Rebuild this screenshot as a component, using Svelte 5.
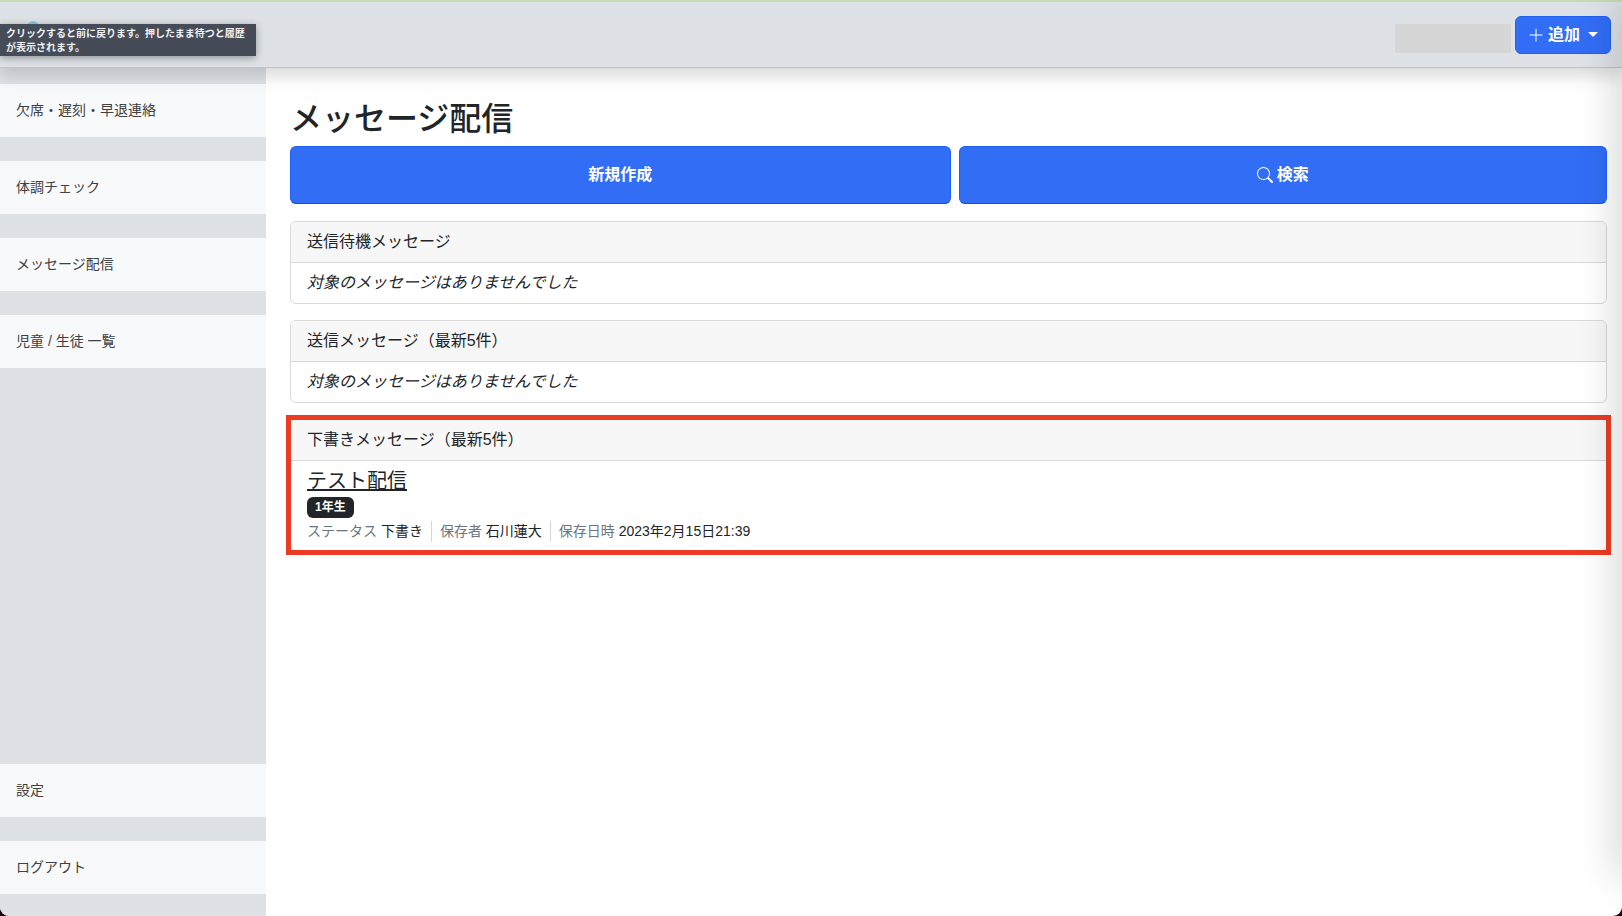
<script>
  const primaryLinks = ['欠席・遅刻・早退連絡', '体調チェック', 'メッセージ配信', '児童 / 生徒 一覧'];
  const accountLinks = ['設定', 'ログアウト'];
  const emptyText = '対象のメッセージはありませんでした';
  const emptyCards = ['送信待機メッセージ', '送信メッセージ（最新5件）'];
  const details = [
    { label: 'ステータス', value: '下書き' },
    { label: '保存者', value: '石川蓮大' },
    { label: '保存日時', value: '2023年2月15日21:39' }
  ];
</script>

<div class="app">
  <header class="topbar">
    <svg class="brand" width="12" height="12" viewBox="0 0 12 12" aria-hidden="true">
      <circle cx="6" cy="6" r="6" fill="#7fcdf0" />
    </svg>
    <div class="tooltip" role="tooltip">クリックすると前に戻ります。押したまま待つと履歴が表示されます。</div>
    <div class="account"></div>
    <button class="add" type="button">
      <svg width="16" height="16" viewBox="0 0 16 16" aria-hidden="true">
        <path d="M8 2v12M2 8h12" fill="none" stroke="currentColor" stroke-linecap="round" />
      </svg>
      <span>追加</span>
      <span class="caret"></span>
    </button>
  </header>

  <div class="body">
    <nav class="sidebar">
      <div class="group">
        {#each primaryLinks as link}
          <a href="#top">{link}</a>
        {/each}
      </div>
      <div class="group">
        {#each accountLinks as link}
          <a href="#top">{link}</a>
        {/each}
      </div>
    </nav>

    <main>
      <h1>メッセージ配信</h1>
      <div class="actions">
        <button type="button">新規作成</button>
        <button type="button">
          <svg width="16" height="16" viewBox="0 0 16 16" fill="currentColor" aria-hidden="true">
            <path d="M11.742 10.344a6.5 6.5 0 1 0-1.397 1.398h-.001c.03.04.062.078.098.115l3.85 3.85a1 1 0 0 0 1.415-1.414l-3.85-3.85a1.007 1.007 0 0 0-.115-.1zM12 6.5a5.5 5.5 0 1 1-11 0 5.5 5.5 0 0 1 11 0z" />
          </svg>
          <span>検索</span>
        </button>
      </div>

      {#each emptyCards as title}
        <section class="card">
          <h2>{title}</h2>
          <div class="content"><em>{emptyText}</em></div>
        </section>
      {/each}

      <div class="highlight">
        <section class="card">
          <h2>下書きメッセージ（最新5件）</h2>
          <div class="content">
            <a class="subject" href="#top">テスト配信</a>
            <div class="tags"><span class="badge">1年生</span></div>
            <ul>
              {#each details as item}
                <li><span class="label">{item.label}</span> {item.value}</li>
              {/each}
            </ul>
          </div>
        </section>
      </div>
    </main>
  </div>
  <div class="edge"></div>
</div>

<style>
  :global(body) {
    margin: 0;
    background: #14060a;
  }

  .app {
    position: relative;
    display: flex;
    flex-direction: column;
    box-sizing: border-box;
    min-height: 100vh;
    overflow: hidden;
    border-radius: 0 0 9px 9px;
    background: #fff;
    color: #212529;
    font-family: 'Liberation Sans', 'Noto Sans CJK JP', sans-serif;
    font-size: 16px;
    line-height: 24px;
  }

  .topbar {
    position: relative;
    z-index: 1;
    display: flex;
    align-items: center;
    justify-content: flex-end;
    gap: 4px;
    box-sizing: border-box;
    height: 68px;
    padding: 0 11px 0 0;
    border-top: 2px solid #c5dbb0;
    border-bottom: 1px solid #bfc3c3;
    background: #dee2e6;
    box-shadow: 0 8px 16px rgba(0, 0, 0, 0.15);
  }

  .brand {
    position: absolute;
    top: 19px;
    left: 27px;
  }

  .tooltip {
    position: absolute;
    top: 22px;
    left: 0;
    box-sizing: border-box;
    width: 256px;
    padding: 2px 6px;
    background: #454c57;
    box-shadow: 0 2px 8px rgba(0, 0, 0, 0.35);
    color: #f0f1f2;
    font-size: 10px;
    font-weight: 700;
    line-height: 14px;
    font-family: 'Noto Sans CJK JP', sans-serif;
  }

  .account {
    width: 116px;
    height: 29px;
    margin-top: 8px;
    background: #d6d6d6;
  }

  button {
    display: flex;
    align-items: center;
    justify-content: center;
    gap: 4px;
    border: 1px solid #1f60f4;
    border-radius: 6px;
    background: #316df5;
    color: #fff;
    font: 700 16px/24px 'Liberation Sans', 'Noto Sans CJK JP', sans-serif;
  }

  .add {
    padding: 6px 12px;
  }

  .caret {
    margin-left: 4px;
    border-top: 5px solid #fff;
    border-right: 5px solid transparent;
    border-left: 5px solid transparent;
  }

  .body {
    display: flex;
    flex: 1;
  }

  .sidebar {
    display: flex;
    flex: 0 0 266px;
    flex-direction: column;
    justify-content: space-between;
    box-sizing: border-box;
    padding: 16px 0 22px;
    background: #dee2e6;
  }

  .group {
    display: flex;
    flex-direction: column;
    gap: 24px;
  }

  .group a {
    padding: 16px;
    background: #f8f9fb;
    color: #3f4040;
    font-size: 14px;
    line-height: 21px;
    text-decoration: none;
  }

  main {
    flex: 1;
    min-width: 0;
    padding: 32px 15px 24px 24px;
  }

  h1 {
    margin: 0 0 8px;
    font-size: 32px;
    font-weight: 500;
    line-height: 38px;
  }

  .actions {
    display: flex;
    gap: 8px;
    margin-bottom: 17px;
  }

  .actions button {
    flex: 1 1 auto;
    padding: 16px;
    border-bottom-color: #0f50e6;
  }

  .card {
    margin-bottom: 16px;
    overflow: hidden;
    border: 1px solid #d9d9d9;
    border-radius: 6px;
  }

  h2 {
    margin: 0;
    padding: 8px 16px;
    border-bottom: 1px solid #d9d9d9;
    background: #f7f7f7;
    font-size: 16px;
    font-weight: 400;
    line-height: 24px;
  }

  .content {
    padding: 8px 16px;
  }

  .highlight {
    outline: 5px solid #eb3c23;
    outline-offset: -1px;
  }

  .highlight .card {
    margin: 0;
  }

  .subject {
    display: block;
    width: fit-content;
    color: #212529;
    font-size: 20px;
    text-decoration-skip-ink: none;
  }

  .tags {
    display: flex;
    padding: 4px 0 3px;
  }

  .badge {
    padding: 0 8px;
    border-radius: 6px;
    background: #212529;
    color: #fff;
    font-size: 12px;
    font-weight: 700;
    line-height: 21px;
  }

  ul {
    display: flex;
    margin: 0;
    padding: 0;
    font-size: 14px;
    line-height: 21px;
    list-style: none;
  }

  li + li {
    margin-left: 8px;
    padding-left: 8px;
    border-left: 1px solid #d3d7da;
  }

  .label {
    color: #6c757d;
  }

  .edge {
    position: absolute;
    z-index: 2;
    top: 0;
    right: -20px;
    bottom: 40px;
    width: 20px;
    box-shadow: 0 0 40px rgba(0, 0, 0, 0.28);
    pointer-events: none;
  }
</style>
